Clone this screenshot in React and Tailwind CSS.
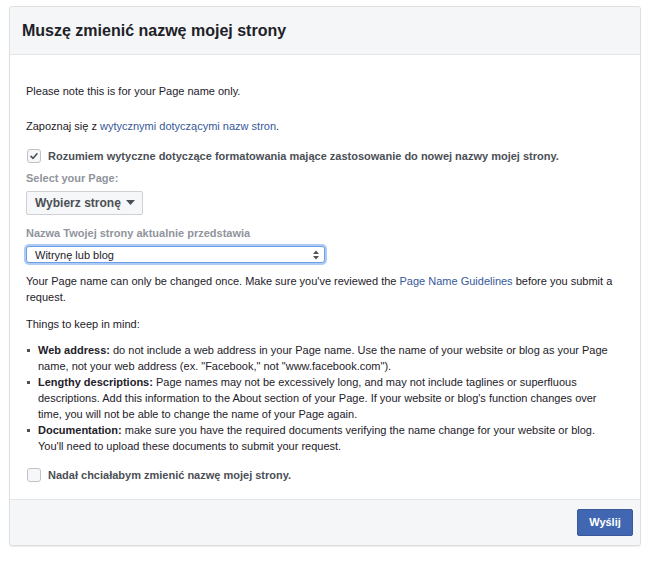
// Page name change dialog — header, guidelines, selects, checklist, footer with submit

export default function App() {
  const bullets = [
    {
      title: 'Web address:',
      text: ' do not include a web address in your Page name. Use the name of your website or blog as your Page name, not your web address (ex. "Facebook," not "www.facebook.com").',
    },
    {
      title: 'Lengthy descriptions:',
      text: " Page names may not be excessively long, and may not include taglines or superfluous descriptions. Add this information to the About section of your Page. If your website or blog's function changes over time, you will not be able to change the name of your Page again.",
    },
    {
      title: 'Documentation:',
      text: " make sure you have the required documents verifying the name change for your website or blog. You'll need to upload these documents to submit your request.",
    },
  ]

  return (
    <div
      className="min-h-[563px] bg-white pt-[6px] pl-[9px]"
      style={{ fontFamily: '"Liberation Sans", Arial, sans-serif' }}
    >
      <div className="w-[632px] border border-[#dddfe2] rounded-[3px] bg-white shadow-[0_1px_1px_rgba(0,0,0,0.08)]">
        {/* Header */}
        <div className="h-[48px] bg-[#f5f6f7] border-b border-[#e5e5e5] flex items-center pl-[12px] rounded-t-[3px]">
          <h1 className="text-[16px] font-bold text-[#1d2129] leading-none">Muszę zmienić nazwę mojej strony</h1>
        </div>

        {/* Body */}
        <div className="pl-[16px] pr-[16px] pt-[28px] pb-[16px] text-[11px] leading-[16px] text-[#1d2129]">
          <p>Please note this is for your Page name only.</p>

          <p className="mt-[19px]">
            Zapoznaj się z <span className="text-[#365899]">wytycznymi dotyczącymi nazw stron</span>.
          </p>

          <label className="mt-[14px] flex items-center gap-[7px] font-bold text-[#4b4f56]">
            <span className="ml-[1px] w-[14px] h-[14px] rounded-[3px] border border-[#bec3c9] bg-[#f6f7f9] flex items-center justify-center">
              <svg width="10" height="10" viewBox="0 0 10 10" fill="none" stroke="#4b4f56" strokeWidth="1.6" strokeLinecap="round" strokeLinejoin="round">
                <path d="M2 5.3 L4.1 7.3 L8 2.8" />
              </svg>
            </span>
            Rozumiem wytyczne dotyczące formatowania mające zastosowanie do nowej nazwy mojej strony.
          </label>

          <div className="mt-[6px] font-bold text-[#90949c]">Select your Page:</div>

          <button className="mt-[5px] h-[24px] pl-[8px] pr-[7px] whitespace-nowrap border border-[#ced0d4] rounded-[2px] bg-[#f6f7f9] text-[12px] font-bold text-[#4b4f56] flex items-center gap-[5px]">
            Wybierz stronę
            <svg width="9" height="6" viewBox="0 0 9 6" fill="#4b4f56">
              <path d="M0 0 H9 L4.5 5 Z" />
            </svg>
          </button>

          <div className="mt-[10px] font-bold text-[#90949c]">Nazwa Twojej strony aktualnie przedstawia</div>

          <div className="mt-[5px] w-[299px] h-[17px] rounded-[3px] border border-[#6a9ee6] shadow-[0_0_0_2px_rgba(110,160,235,0.55)] bg-white flex items-center justify-between pl-[8px] pr-[5px] text-[11px] text-[#1d2129]">
            <span>Witrynę lub blog</span>
            <svg width="6" height="10" viewBox="0 0 6 10" fill="#555">
              <path d="M0 4 L3 0.5 L6 4 Z" />
              <path d="M0 6 L3 9.5 L6 6 Z" />
            </svg>
          </div>

          <p className="mt-[10px] pr-[4px]">
            Your Page name can only be changed once. Make sure you've reviewed the{' '}
            <span className="text-[#365899]">Page Name Guidelines</span> before you submit a request.
          </p>

          <p className="mt-[11px]">Things to keep in mind:</p>

          <ul className="mt-[10px] flex flex-col">
            {bullets.map(item => (
              <li key={item.title} className="flex">
                <span className="w-[12px] shrink-0 pt-[7px] pl-[1px]">
                  <span className="block w-[3px] h-[3px] bg-[#4b4f56]" />
                </span>
                <span className="pr-[10px]">
                  <b>{item.title}</b>
                  {item.text}
                </span>
              </li>
            ))}
          </ul>

          <label className="mt-[13px] flex items-center gap-[7px] font-bold text-[#4b4f56]">
            <span className="ml-[1px] w-[14px] h-[14px] rounded-[3px] border border-[#bec3c9] bg-[#f6f7f9]" />
            Nadał chciałabym zmienić nazwę mojej strony.
          </label>
        </div>

        {/* Footer */}
        <div className="h-[46px] bg-[#f5f6f7] border-t border-[#e5e5e5] flex items-center justify-end pr-[7px] rounded-b-[3px]">
          <button className="w-[56px] h-[27px] rounded-[2px] border border-[#3b5998] bg-[#4267b2] text-white text-[11px] font-bold">
            Wyślij
          </button>
        </div>
      </div>
    </div>
  )
}
